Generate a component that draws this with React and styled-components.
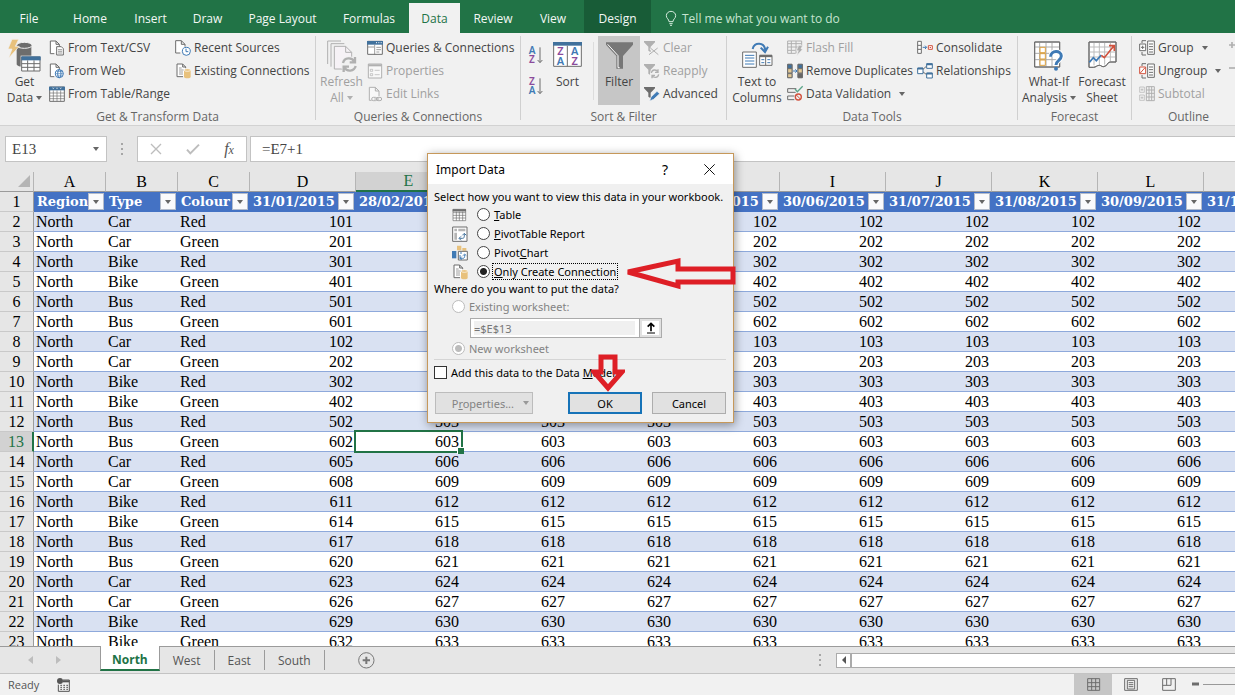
import React, { useState } from 'react';
import styled, { createGlobalStyle, css } from 'styled-components';

const uiFont = '"Open Sans", "Noto Sans", sans-serif';
const dialogFont = '"Noto Sans", "Open Sans", sans-serif';
const cellFont = '"Liberation Serif", serif';

const GlobalStyle = createGlobalStyle`
  * {
    box-sizing: border-box;
  }

  body {
    margin: 0;
    overflow: hidden;
    font-family: ${uiFont};
    font-size: 12px;
    color: #444;
  }

  button, input {
    margin: 0;
    padding: 0;
    border: none;
    background: none;
    color: inherit;
    font: inherit;
  }
`;

// Window
const Window = styled.div`
  display: flex;
  flex-direction: column;
  height: 100vh;
  background-color: #e6e6e6;
`;

const Svg = styled.svg`
  display: block;
  flex: none;
  overflow: visible;
  fill: none;
  stroke: ${props => props.$color || '#6d6d6d'};
  stroke-width: 3;
`;

const Caret = styled.span`
  flex: none;
  border: 3px solid transparent;
  border-top: 4px solid ${props => props.$color || '#666'};
  border-bottom: none;
`;

// Ribbon tabs
const TabBar = styled.nav`
  display: flex;
  flex: none;
  align-items: flex-end;
  height: 33px;
  background-color: #217346;
`;

const RibbonTab = styled.button`
  flex: none;
  width: ${props => props.$w}px;
  height: 30px;
  white-space: nowrap;
  color: #f3f8f5;
  ${props => props.$active && css`
    background-color: #f1f1f1;
    color: #217346;
  `}
  ${props => props.$context && css`
    height: 33px;
    margin-left: 4px;
    padding-top: 3px;
    background-color: #185c37;
  `}
`;

const TellMe = styled.button`
  display: flex;
  align-items: center;
  gap: 5px;
  height: 30px;
  padding-left: 14px;
  white-space: nowrap;
  color: #c5e3d0;
`;

// Ribbon
const RibbonBar = styled.div`
  display: flex;
  flex: none;
  height: 93px;
  overflow: hidden;
  background-color: #f1f1f1;
  border-bottom: 1px solid #d2d2d2;
`;

const GroupBox = styled.section`
  display: flex;
  flex-direction: column;
  flex: ${props => (props.$w ? 'none' : '1')};
  width: ${props => (props.$w ? `${props.$w}px` : 'auto')};
  margin: 3px 0 5px;
  border-right: 1px solid #d0d0d0;

  &:last-child {
    border-right: none;
  }
`;

const GroupItems = styled.div`
  display: flex;
  flex: none;
  height: 70px;
  padding-left: ${props => props.$pad || 0}px;
`;

const GroupLabel = styled.div`
  flex: none;
  margin-top: 3px;
  line-height: 16px;
  text-align: center;
  white-space: nowrap;
  color: #666;
`;

const Column = styled.div`
  display: flex;
  flex-direction: column;
  flex: none;
  width: ${props => (props.$w ? `${props.$w}px` : 'auto')};
  padding-left: ${props => props.$pad || 0}px;
`;

const SmallButton = styled.button`
  display: flex;
  align-items: center;
  gap: 3px;
  height: 23px;
  white-space: nowrap;
  color: ${props => (props.disabled ? '#a0a0a0' : '#444')};

  ${Caret} {
    margin-left: 5px;
  }
`;

const LargeButton = styled.button`
  display: flex;
  flex-direction: column;
  align-items: center;
  flex: none;
  width: ${props => props.$w}px;
  height: 69px;
  padding-top: 2px;
  line-height: 16px;
  white-space: nowrap;
  color: ${props => (props.disabled ? '#a0a0a0' : '#444')};
  background-color: ${props => (props.$pressed ? '#c6c6c6' : 'transparent')};

  svg {
    height: 35px;
    margin-bottom: 1px;
  }

  span {
    display: flex;
    align-items: center;
    gap: 3px;
  }
`;

const SortIcons = styled.div`
  display: flex;
  flex-direction: column;
  align-items: center;
  gap: 10px;
  flex: none;
  width: 30px;
  padding-top: 9px;

  button {
    height: 21px;
  }
`;

const Divider = styled.div`
  width: 1px;
  height: 58px;
  margin: 6px 4px 0 9px;
  background-color: #dcdcdc;
`;

// Formula bar
const FormulaBar = styled.div`
  display: flex;
  flex: none;
  align-items: center;
  height: 46px;
  padding-left: 5px;
  font-family: ${cellFont};
  font-size: 15px;
`;

const NameBox = styled.div`
  display: flex;
  align-items: center;
  width: 102px;
  height: 26px;
  padding: 0 7px 0 6px;
  background-color: #fff;
  border: 1px solid #c3c3c3;

  input {
    flex: 1;
    width: 60px;
  }
`;

const Dots = styled.div`
  width: 2px;
  height: 12px;
  margin: 0 ${props => props.$gap}px;
  background: repeating-linear-gradient(#a6a6a6 0 2px, transparent 2px 5px);
`;

const FormulaButtons = styled.div`
  display: flex;
  align-items: center;
  justify-content: space-around;
  width: 110px;
  height: 26px;
  background-color: #fff;
  border: 1px solid #c3c3c3;
`;

const FxButton = styled.button`
  font-style: italic;
  font-size: 16px;
  color: #555;

  small {
    font-size: 12px;
  }
`;

const FormulaInput = styled.input`
  flex: 1;
  height: 26px;
  margin-left: 3px;
  padding-left: 11px;
  background-color: #fff;
  border: 1px solid #c3c3c3;
  border-right: none;
`;

// Sheet
const SheetArea = styled.main`
  flex: 1;
  min-height: 0;
  overflow: hidden;
`;

const Sheet = styled.table`
  width: 1310px;
  table-layout: fixed;
  border-collapse: separate;
  border-spacing: 0;
  font-family: ${cellFont};
  font-size: 16px;
  line-height: 19px;
  color: #000;
`;

const Col = styled.col`
  width: ${props => props.$w}px;
`;

const Corner = styled.th`
  height: 20px;
  padding: 0 3px 2px 0;
  border-right: 1px solid #b5b5b5;
  border-bottom: 1px solid #9b9b9b;

  svg {
    margin-left: auto;
  }
`;

const ColumnHead = styled.th`
  height: 20px;
  padding: 0;
  line-height: 18px;
  font-weight: 400;
  border-right: 1px solid #b5b5b5;
  border-bottom: 1px solid #9b9b9b;
  ${props => props.$selected && css`
    color: #217346;
    background-color: #d2d2d2;
    border-bottom: 2px solid #217346;
  `}
`;

const RowHead = styled.th`
  height: 20px;
  padding: 0;
  font-weight: 400;
  background-color: #e6e6e6;
  border-right: 1px solid #9b9b9b;
  border-bottom: 1px solid #c9c9c9;
  ${props => props.$selected && css`
    color: #217346;
    background-color: #d2d2d2;
    border-right: 2px solid #217346;
  `}
`;

const FieldHead = styled.th`
  height: 20px;
  padding: 0;
  background-color: #4472c4;
  border-bottom: 1px solid #4472c4;
  font-family: "DejaVu Serif", serif;
  font-size: 13px;
  color: #fff;

  div {
    display: flex;
    align-items: center;
    justify-content: space-between;
    padding: 0 2px 0 3px;
    white-space: nowrap;
  }
`;

const FilterButton = styled.button`
  display: flex;
  align-items: center;
  justify-content: center;
  flex: none;
  width: 16px;
  height: 17px;
  background-color: #fafafc;
  border: 1px solid #b4bccb;
`;

const Cell = styled.td`
  position: relative;
  height: 20px;
  padding: 0 3px 0 2px;
  text-align: ${props => (props.$number ? 'right' : 'left')};
  background-color: ${props => (props.$banded ? '#d9e1f2' : '#fff')};
  border-bottom: 1px solid #8ea9db;
`;

const Selection = styled.div`
  position: absolute;
  z-index: 1;
  inset: -2px -1px -2px -2px;
  border: 2px solid #217346;

  &::after {
    content: '';
    position: absolute;
    right: -3px;
    bottom: -3px;
    width: 6px;
    height: 6px;
    background-color: #217346;
    border: 1px solid #fff;
    border-width: 1px 0 0 1px;
  }
`;

// Sheet tabs
const SheetBar = styled.div`
  display: flex;
  flex: none;
  height: 28px;
  border-top: 1px solid #9b9b9b;
  border-bottom: 1px solid #c3c3c3;
`;

const SheetNav = styled.div`
  display: flex;
  align-items: center;
  justify-content: center;
  gap: 23px;
  width: 100px;
  padding-right: 12px;
`;

const SheetTab = styled.button`
  height: 20px;
  margin-top: 3px;
  padding: 0 13px;
  border-right: 1px solid #9b9b9b;
  color: #555;
  ${props => props.$active && css`
    height: 25px;
    margin-top: -1px;
    padding: 3px 11px 0;
    font-weight: 700;
    color: #217346;
    background-color: #fff;
    border-left: 1px solid #9b9b9b;
    border-bottom: 2px solid #217346;
  `}
`;

const AddSheet = styled.button`
  margin-left: 33px;
`;

const ScrollBar = styled.div`
  display: flex;
  align-items: center;
  width: 416px;
  margin-left: auto;

  ${Dots} {
    margin-left: 0;
    margin-right: 15px;
  }
`;

const ScrollButton = styled.button`
  display: flex;
  align-items: center;
  justify-content: center;
  width: 15px;
  height: 15px;
  background-color: #fff;
  border: 1px solid #ababab;
`;

const ScrollThumb = styled.div`
  flex: 1;
  height: 15px;
  background-color: #fff;
  border: 1px solid #ababab;
  border-right: none;
`;

// Status bar
const StatusBar = styled.footer`
  display: flex;
  flex: none;
  align-items: center;
  height: 21px;
  padding-left: 8px;
  background-color: #f1f1f1;
  font-size: 11px;
  color: #555;

  > svg {
    margin-left: 18px;
  }
`;

const ViewButtons = styled.div`
  display: flex;
  height: 21px;
  margin-left: auto;
`;

const ViewButton = styled.button`
  display: flex;
  align-items: center;
  justify-content: center;
  width: 38px;
  background-color: ${props => (props.$active ? '#c6c6c6' : 'transparent')};
`;

const Zoom = styled.div`
  display: flex;
  align-items: center;
  gap: 4px;
  padding-left: 4px;
`;

const ZoomLine = styled.div`
  width: 32px;
  height: 1px;
  background-color: #999;
`;

// Dialog
const Dialog = styled.form`
  position: absolute;
  z-index: 2;
  top: 153px;
  left: 427px;
  width: 307px;
  background-color: #f0f0f0;
  border: 1px solid #c6985a;
  box-shadow: 1px 2px 9px rgba(0, 0, 0, 0.4);
  font-family: ${dialogFont};
  font-size: 11px;
  color: #000;
`;

const TitleBar = styled.header`
  display: flex;
  align-items: center;
  height: 30px;
  padding: 0 18px 0 8px;
  background-color: #fff;

  h2 {
    flex: 1;
    margin: 0;
    font-size: 12px;
    font-weight: 400;
  }

  button {
    font-size: 14px;
  }

  button + button {
    margin-left: 36px;
  }
`;

const DialogBody = styled.div`
  padding: 5px 7px 8px 6px;
`;

const Prompt = styled.p`
  margin: 0;
  line-height: 16px;
  white-space: nowrap;
`;

const Option = styled.div`
  display: flex;
  align-items: center;
  height: ${props => props.$h || 19}px;
  padding-left: ${props => (props.$flush ? 0 : 18)}px;
  color: ${props => (props.$disabled ? '#838383' : '#000')};

  svg {
    margin-right: 9px;
  }

  label {
    padding: 0 1px;
    line-height: 15px;
    margin-left: 2px;
    white-space: nowrap;
    border: 1px dotted ${props => (props.$focus ? '#000' : 'transparent')};
  }
`;

const Radio = styled.input`
  appearance: none;
  flex: none;
  width: 13px;
  height: 13px;
  border: 1px solid #444;
  border-radius: 50%;
  background-color: #fff;

  &:checked {
    background: radial-gradient(#222 0 3px, #fff 4px);
  }

  &:disabled {
    border-color: #bcbcbc;
  }

  &:disabled:checked {
    background: radial-gradient(#bcbcbc 0 3px, #fff 4px);
  }
`;

const CheckBox = styled.input`
  appearance: none;
  width: 13px;
  height: 13px;
  border: 1px solid #333;
  background-color: #fff;
`;

const RangeField = styled.div`
  display: flex;
  width: 192px;
  height: 20px;
  margin: 3px 0 0 36px;
  border: 1px solid #ababab;
  background-color: #fff;

  input {
    flex: 1;
    width: 100px;
    margin: 2px 5px 2px 3px;
    background-color: #f0f0f0;
    color: #777;
  }

  button {
    display: flex;
    align-items: center;
    justify-content: center;
    width: 21px;
    border: 2px solid #e1e1e1;
    outline: 1px solid #ababab;
  }
`;

const Rule = styled.hr`
  margin: 1px 0 2px;
  border: none;
  border-top: 1px solid #d5d5d5;
`;

const DialogActions = styled.div`
  display: flex;
  gap: 10px;
  margin-top: 10px;
`;

const DialogButton = styled.button`
  width: 74px;
  height: 22px;
  background-color: #e1e1e1;
  border: ${props => (props.$primary ? '2px solid #1673b8' : '1px solid #adadad')};

  &:disabled {
    display: flex;
    align-items: center;
    justify-content: flex-end;
    gap: 9px;
    width: 98px;
    margin: 0 auto 0 1px;
    padding-right: 3px;
    color: #838383;
    border-color: #bcbcbc;
  }
`;

const ArrowLeft = styled.svg`
  position: absolute;
  top: 102px;
  left: 194px;
  fill: none;
  stroke: #de1f26;
  stroke-width: 5;
  pointer-events: none;
`;

const ArrowDown = styled(ArrowLeft)`
  top: 199px;
  left: 163px;
`;

// Small ribbon icons are drawn on a 48 x 48 grid
const SmallIcon = ({ children, color, w = 16 }) => (
  <Svg width={w} height="16" viewBox={`0 0 ${w * 3} 48`} $color={color}>{children}</Svg>
);

const Page = () => (
  <path d="M16 41H4V3h17l10 10v7M21 3v10h10" fill="#fff" />
);

const TextFileIcon = () => (
  <SmallIcon>
    <Page />
    <path d="M23 20h14l6 6v19H23z" fill="#fff" />
    <path d="M27 29h12M27 34h12M27 39h12" strokeWidth="2" />
  </SmallIcon>
);

const WebIcon = () => (
  <SmallIcon>
    <Page />
    <g stroke="#3f7ab5">
      <circle cx="31" cy="32" r="12" fill="#fff" />
      <ellipse cx="31" cy="32" rx="5" ry="12" />
      <path d="M19 32h24M22 25h18M22 39h18" strokeWidth="2" />
    </g>
  </SmallIcon>
);

const TableIcon = () => (
  <SmallIcon>
    <path d="M2 3h44v43H2z" fill="#fff" />
    <path d="M0 2h48v11H0z" fill="#41719c" stroke="none" />
    <path d="M2 21h44M2 30h44M2 38h44M13 13v33M24 13v33M35 13v33" strokeWidth="2" />
    <path d="M11 5l2 3 2-3M22 5l2 3 2-3M33 5l2 3 2-3" stroke="#fff" strokeWidth="2" />
  </SmallIcon>
);

const RecentIcon = () => (
  <SmallIcon>
    <path d="M16 39H2V2h17l11 11v7M19 2v11h11" fill="#fff" />
    <circle cx="34" cy="34" r="12" fill="#fff" stroke="#3f7ab5" />
    <path d="M33 26v9h7" stroke="#3f7ab5" />
  </SmallIcon>
);

const ConnectionIcon = () => (
  <SmallIcon>
    <path d="M24 41H6V3h17l9 9v4M23 3v9h9" fill="#fff" />
    <path d="M12 15h8M12 21h14M12 27h12M12 33h12" strokeWidth="2" />
    <path d="M27 21v21c0 5 20 5 20 0V21z" fill="#e8c17c" stroke="none" />
    <ellipse cx="37" cy="21" rx="10" ry="4" fill="#e8c17c" stroke="#fff" strokeWidth="2" />
  </SmallIcon>
);

const QueriesIcon = () => (
  <SmallIcon>
    <path d="M2 4h44v39H2z" fill="#fff" />
    <path d="M0 3h48v11H0z" fill="#41719c" stroke="none" />
    <path d="M27 8h3M34 8h3M41 8h3" stroke="#fff" />
    <path d="M3 21h18M23 14v29M28 22h14M28 29h14M28 36h9" strokeWidth="2" />
  </SmallIcon>
);

const PropertiesIcon = () => (
  <SmallIcon color="#b0b0b0">
    <path d="M4 3h40v42H4z" fill="#f8f8f8" />
    <path d="M4 7h40" strokeWidth="6" />
    <path d="M10 19h7v6h-7zM10 32h7v6h-7zM23 22h15M23 35h15" strokeWidth="2" />
  </SmallIcon>
);

const LinksIcon = () => (
  <SmallIcon color="#b0b0b0">
    <path d="M14 43H7V4h18l11 11v15M25 4v11h11" fill="#f8f8f8" />
    <rect x="14" y="34" width="16" height="10" rx="5" />
    <rect x="28" y="34" width="16" height="10" rx="5" />
    <path d="M22 39h14" />
  </SmallIcon>
);

const Funnel = ({ fill }) => (
  <path d="M0 3h33v4L20 20v17l-7-5V20L0 7z" fill={fill} stroke="none" />
);

const ClearIcon = () => (
  <SmallIcon color="#b0b0b0">
    <Funnel fill="#b0b0b0" />
    <path d="M19 24l22 20M41 24L17 44" stroke="#f1f1f1" strokeWidth="8" />
    <path d="M19 24l24 20M41 24L15 44" />
  </SmallIcon>
);

const ReapplyIcon = () => (
  <SmallIcon color="#b0b0b0">
    <Funnel fill="#b0b0b0" />
    <circle cx="33" cy="32" r="15" fill="#f1f1f1" stroke="none" />
    <path d="M22 30c2-11 15-12 20-3M42 19v9h-9M44 34c-2 11-15 12-20 3M24 46v-9h9" strokeWidth="4" />
  </SmallIcon>
);

const AdvancedIcon = () => (
  <SmallIcon>
    <Funnel fill="#6d6d6d" />
    <path d="M17 45l4-12 18-17 8 7-18 17z" fill="#3f7ab5" stroke="#f1f1f1" strokeWidth="2" />
  </SmallIcon>
);

const FlashFillIcon = () => (
  <SmallIcon color="#b0b0b0">
    <path d="M2 3h42v17M2 3v37h24M2 11h42M2 21h35M2 31h24M13 3v37M27 3v37" />
    <path d="M35 16h12l-5 11h6L29 47l5-15h-6z" fill="#b0b0b0" stroke="#f1f1f1" strokeWidth="2" />
  </SmallIcon>
);

const DuplicatesIcon = () => (
  <SmallIcon>
    <path d="M2 4h13v40H2zM33 4h13v40H33z" fill="#fff" />
    <path d="M2 4h13v13H2zM33 4h13v13H33z" fill="#41719c" />
    <path d="M2 17h13v13H2zM2 32h13v12H2z" fill="#e3c995" />
    <path d="M33 17h13v13H33z" fill="#e3c995" />
    <path d="M33 32h13v12H33z" fill="#666" />
    <path d="M18 24h11M25 19l5 5-5 5" stroke="#3f7ab5" />
  </SmallIcon>
);

const ValidationIcon = () => (
  <SmallIcon>
    <path d="M28 8H2v11h24M22 30H2v11h20" />
    <path d="M24 9l7 8L47 1" stroke="#5ba588" strokeWidth="4" />
    <circle cx="34" cy="33" r="9" stroke="#d1513d" strokeWidth="4" />
    <path d="M28 27l12 12" stroke="#d1513d" />
  </SmallIcon>
);

const ConsolidateIcon = () => (
  <SmallIcon>
    <path d="M2 4h11v36H2zM2 16h11M2 28h11" fill="#fff" />
    <path d="M17 22h11M24 17l5 5-5 5" stroke="#3f7ab5" />
    <path d="M34 17h12v11H34z" stroke="#d1513d" fill="#fff" />
    <path d="M38 21h4v3h-4z" fill="#d1513d" stroke="none" />
  </SmallIcon>
);

const RelationshipsIcon = () => (
  <SmallIcon>
    <path d="M17 20L29 9M17 26l12 9" />
    <g fill="#fff" stroke="#41719c">
      <path d="M2 15h16v17H2z" />
      <path d="M29 2h17v14H29z" />
      <path d="M29 30h17v15H29z" />
      <path d="M2 17h16M29 4h17M29 32h17" strokeWidth="5" />
    </g>
  </SmallIcon>
);

const GroupIcon = ({ mark = '#6d6d6d', ungroup }) => (
  <SmallIcon>
    <path d="M21 2H9v7M9 36v9h12" />
    <path d="M26 3h20v40H26zM30 12h12M30 20h12M30 28h12M30 36h12" fill="#fff" />
    <path d="M2 12h18v20H2z" fill="#fff" stroke={mark} />
    <path d={ungroup ? 'M4 30L18 14' : 'M6 22h10M11 17v10'} stroke={mark} />
  </SmallIcon>
);

const SubtotalIcon = () => (
  <SmallIcon color="#b0b0b0">
    <path d="M2 3h14v16H2zM2 27h14v16H2zM5 11h8M9 7v8M5 35h8M9 31v8" strokeWidth="2" />
    <path d="M22 2h24v42H22zM22 12h24M22 22h24M22 33h24M30 2v42M38 2v42" />
  </SmallIcon>
);

// Large ribbon icons, three units to a pixel
const GetDataIcon = () => (
  <Svg width="33" height="33" viewBox="0 0 99 99">
    <path d="M26 18v58c0 10 44 10 44 0V18z" fill="#6d6d6d" stroke="none" />
    <ellipse cx="49" cy="19" rx="23" ry="9" fill="#6d6d6d" stroke="#f1f1f1" />
    <path d="M12 1h20L22 22h12L2 57l10-27H0z" fill="#e8c17c" stroke="#f1f1f1" strokeWidth="2" />
    <path d="M38 50h61v49H38z" fill="#f1f1f1" stroke="none" />
    <path d="M41 54h55v42H41z" fill="#fff" />
    <path d="M40 52h58v12H40z" fill="#41719c" stroke="none" />
    <path d="M41 74h55M41 85h55M59 64v32M78 64v32" />
  </Svg>
);

const RefreshIcon = () => (
  <Svg width="29" height="33" viewBox="8 0 87 99" $color="#b0b0b0">
    <path d="M10 75V6h40M20 83V14h40" />
    <path d="M30 90V22h34l18 18v50z" fill="#f6f2f6" />
    <path d="M64 22v18h18" />
    <circle cx="74" cy="77" r="25" fill="#f1f1f1" stroke="none" />
    <path d="M56 72c4-17 27-18 34-4M92 54v16H76M94 81c-4 17-27 18-34 4M58 99V83h16" strokeWidth="7" />
  </Svg>
);

const SortIcon = () => (
  <Svg width="29" height="29" viewBox="0 0 87 87">
    <path d="M2 8h83v68H2z" fill="#fff" />
    <path d="M0 3h87v11H0z" fill="#41719c" stroke="none" />
    <path d="M43 14v62" />
    <g stroke="none" fontFamily="Noto Sans" fontSize="33" fontWeight="600" textAnchor="middle">
      <text x="22" y="42" fill="#8b4b9b">Z</text>
      <text x="22" y="72" fill="#3f7ab5">A</text>
      <text x="65" y="42" fill="#3f7ab5">A</text>
      <text x="65" y="72" fill="#8b4b9b">Z</text>
    </g>
  </Svg>
);

const SortOrderIcon = ({ top, bottom }) => (
  <Svg width="14" height="19" viewBox="0 0 42 57">
    <g stroke="none" fontFamily="Noto Sans" fontSize="30" fontWeight="600" textAnchor="middle">
      <text x="9" y="24" fill={top === 'A' ? '#3f7ab5' : '#8b4b9b'}>{top}</text>
      <text x="9" y="50" fill={bottom === 'A' ? '#3f7ab5' : '#8b4b9b'}>{bottom}</text>
    </g>
    <path d="M33 4v45M26 42l7 8 7-8" />
  </Svg>
);

const FilterIcon = () => (
  <Svg width="29" height="29" viewBox="0 0 87 87">
    <path d="M3 4h81v7L54 45v38H34V45L3 11z" fill="#777" stroke="none" />
    <path d="M8 10l31 34v36h5" stroke="#fff" />
  </Svg>
);

const ColumnsIcon = () => (
  <Svg width="31" height="29" viewBox="0 0 93 87">
    <path d="M2 33h41v46H2z" fill="#fff" />
    <path d="M9 43h28M9 51h28M9 60h28M9 69h28" stroke="#3f7ab5" />
    <path d="M53 43h37v30H53zM71 43v30" fill="#fff" />
    <path d="M53 45h37" strokeWidth="7" />
    <path d="M58 56h9M58 65h9M76 56h9M76 65h9" stroke="#3f7ab5" />
    <path d="M32 24c4-22 35-22 38 4" stroke="#3f7ab5" strokeWidth="6" />
    <path d="M56 20l13 13 9-16" stroke="#3f7ab5" strokeWidth="6" />
  </Svg>
);

const WhatIfIcon = () => (
  <Svg width="30" height="31" viewBox="0 0 90 93">
    <path d="M2 6h75v75H2z" fill="#fff" />
    <path d="M17 6v75M36 6v75M54 6v75M2 21h75M2 40h75M2 59h75" stroke="#aaa" />
    <path d="M2 6h75v75H2z" />
    <path d="M18 22h16v16H18zM18 41h16v16H18zM18 60h16v16H18z" stroke="#dca03f" fill="#fff" />
    <path d="M50 50c0-20 32-20 32-2 0 13-16 13-16 27" stroke="#fff" strokeWidth="15" />
    <path d="M50 50c0-20 32-20 32-2 0 13-16 13-16 27" stroke="#3f7ab5" strokeWidth="9" />
    <circle cx="66" cy="86" r="6" fill="#3f7ab5" stroke="none" />
  </Svg>
);

const ForecastIcon = () => (
  <Svg width="29" height="31" viewBox="0 0 87 93">
    <path d="M3 6h81v60H66c-8 0-8 14-20 14-6 0-6-4-12-4-8 0-10 6-18 6H3z" fill="#fff" />
    <path d="M18 6v70M34 6v70M50 6v68M67 6v60M3 21h81M3 36h81M3 51h81" stroke="#bbb" />
    <path d="M3 6h81v60H66c-8 0-8 14-20 14-6 0-6-4-12-4-8 0-10 6-18 6H3z" />
    <path d="M4 67l12-14 9 9 15-17" stroke="#3f7ab5" strokeWidth="5" />
    <path d="M40 46l9 7 29-36M63 17h16v16" stroke="#d1513d" strokeWidth="5" />
  </Svg>
);

// Dialog icons
const PivotTableIcon = () => (
  <SmallIcon>
    <path d="M2 3h43v43H2z" fill="#fff" />
    <path d="M7 8h8v8H7zM19 8h21v8H19zM7 20h8v21H7z" fill="#b5b5b5" stroke="none" />
    <path d="M22 37h9c6 0 6-3 6-14M27 31l-6 6 6 6M31 28l6-6 6 6" stroke="#41719c" />
  </SmallIcon>
);

const PivotChartIcon = () => (
  <SmallIcon>
    <path d="M0 18h13v22H0z" fill="#3f7ab5" stroke="none" />
    <path d="M15 2h13v14H15zM31 9h12v8H31z" fill="#e8c17c" stroke="none" />
    <path d="M19 19h27v26H19z" fill="#fff" />
    <path d="M24 24h6M24 30v10h8c6 0 6-3 6-10M29 35l-5 5 5 5M33 32l5-5 5 5" stroke="#3f7ab5" />
  </SmallIcon>
);

const PlainTableIcon = () => (
  <SmallIcon>
    <path d="M3 7h38v34H3zM3 17h38M3 25h38M3 33h38M13 14v27M22 14v27M32 14v27" fill="#fff" strokeWidth="2" />
    <path d="M2 10h40" strokeWidth="7" />
  </SmallIcon>
);

const tabs = [
  { label: 'File', w: 58 },
  { label: 'Home', w: 64 },
  { label: 'Insert', w: 57 },
  { label: 'Draw', w: 57 },
  { label: 'Page Layout', w: 93 },
  { label: 'Formulas', w: 80 },
  { label: 'Data', w: 51 },
  { label: 'Review', w: 66 },
  { label: 'View', w: 54 },
  { label: 'Design', w: 67, context: true },
];

const columns = [
  { letter: 'A', title: 'Region', w: 72 },
  { letter: 'B', title: 'Type', w: 72 },
  { letter: 'C', title: 'Colour', w: 72 },
  { letter: 'D', title: '31/01/2015', w: 106 },
  { letter: 'E', title: '28/02/2015', w: 106 },
  { letter: 'F', title: '31/03/2015', w: 106 },
  { letter: 'G', title: '30/04/2015', w: 106 },
  { letter: 'H', title: '31/05/2015', w: 106 },
  { letter: 'I', title: '30/06/2015', w: 106 },
  { letter: 'J', title: '31/07/2015', w: 106 },
  { letter: 'K', title: '31/08/2015', w: 106 },
  { letter: 'L', title: '30/09/2015', w: 106 },
  { letter: 'M', title: '31/10/2015', w: 106 },
];

// Type, colour and January value; every later month is one more
const rows = [
  ['Car', 'Red', 101],
  ['Car', 'Green', 201],
  ['Bike', 'Red', 301],
  ['Bike', 'Green', 401],
  ['Bus', 'Red', 501],
  ['Bus', 'Green', 601],
  ['Car', 'Red', 102],
  ['Car', 'Green', 202],
  ['Bike', 'Red', 302],
  ['Bike', 'Green', 402],
  ['Bus', 'Red', 502],
  ['Bus', 'Green', 602],
  ['Car', 'Red', 605],
  ['Car', 'Green', 608],
  ['Bike', 'Red', 611],
  ['Bike', 'Green', 614],
  ['Bus', 'Red', 617],
  ['Bus', 'Green', 620],
  ['Car', 'Red', 623],
  ['Car', 'Green', 626],
  ['Bike', 'Red', 629],
  ['Bike', 'Green', 632],
];

const months = columns.slice(3);

const Ribbon = () => (
  <RibbonBar>
    <GroupBox $w={316}>
      <GroupItems>
        <LargeButton $w={49}>
          <GetDataIcon />
          <span>Get</span>
          <span>Data <Caret /></span>
        </LargeButton>
        <Column $w={126}>
          <SmallButton><TextFileIcon />From Text/CSV</SmallButton>
          <SmallButton><WebIcon />From Web</SmallButton>
          <SmallButton><TableIcon />From Table/Range</SmallButton>
        </Column>
        <Column>
          <SmallButton><RecentIcon />Recent Sources</SmallButton>
          <SmallButton><ConnectionIcon />Existing Connections</SmallButton>
        </Column>
      </GroupItems>
      <GroupLabel>Get &amp; Transform Data</GroupLabel>
    </GroupBox>

    <GroupBox $w={205}>
      <GroupItems>
        <LargeButton $w={51} disabled>
          <RefreshIcon />
          <span>Refresh</span>
          <span>All <Caret $color="#b0b0b0" /></span>
        </LargeButton>
        <Column>
          <SmallButton><QueriesIcon />Queries &amp; Connections</SmallButton>
          <SmallButton disabled><PropertiesIcon />Properties</SmallButton>
          <SmallButton disabled><LinksIcon />Edit Links</SmallButton>
        </Column>
      </GroupItems>
      <GroupLabel>Queries &amp; Connections</GroupLabel>
    </GroupBox>

    <GroupBox $w={206}>
      <GroupItems>
        <SortIcons>
          <button aria-label="Sort A to Z"><SortOrderIcon top="A" bottom="Z" /></button>
          <button aria-label="Sort Z to A"><SortOrderIcon top="Z" bottom="A" /></button>
        </SortIcons>
        <LargeButton $w={33}>
          <SortIcon />
          <span>Sort</span>
        </LargeButton>
        <Divider />
        <LargeButton $w={42} $pressed>
          <FilterIcon />
          <span>Filter</span>
        </LargeButton>
        <Column $pad={4}>
          <SmallButton disabled><ClearIcon />Clear</SmallButton>
          <SmallButton disabled><ReapplyIcon />Reapply</SmallButton>
          <SmallButton><AdvancedIcon />Advanced</SmallButton>
        </Column>
      </GroupItems>
      <GroupLabel>Sort &amp; Filter</GroupLabel>
    </GroupBox>

    <GroupBox $w={291}>
      <GroupItems>
        <LargeButton $w={60}>
          <ColumnsIcon />
          <span>Text to</span>
          <span>Columns</span>
        </LargeButton>
        <Column $w={130}>
          <SmallButton disabled><FlashFillIcon />Flash Fill</SmallButton>
          <SmallButton><DuplicatesIcon />Remove Duplicates</SmallButton>
          <SmallButton><ValidationIcon />Data Validation <Caret /></SmallButton>
        </Column>
        <Column>
          <SmallButton><ConsolidateIcon />Consolidate</SmallButton>
          <SmallButton><RelationshipsIcon />Relationships</SmallButton>
        </Column>
      </GroupItems>
      <GroupLabel>Data Tools</GroupLabel>
    </GroupBox>

    <GroupBox $w={114}>
      <GroupItems $pad={4}>
        <LargeButton $w={54}>
          <WhatIfIcon />
          <span>What-If</span>
          <span>Analysis <Caret /></span>
        </LargeButton>
        <LargeButton $w={52}>
          <ForecastIcon />
          <span>Forecast</span>
          <span>Sheet</span>
        </LargeButton>
      </GroupItems>
      <GroupLabel>Forecast</GroupLabel>
    </GroupBox>

    <GroupBox>
      <GroupItems $pad={7}>
        <Column $w={90}>
          <SmallButton><GroupIcon />Group <Caret /></SmallButton>
          <SmallButton><GroupIcon mark="#d1513d" ungroup />Ungroup <Caret /></SmallButton>
          <SmallButton disabled><SubtotalIcon />Subtotal</SmallButton>
        </Column>
        <Column>
          <SmallButton disabled aria-label="Show Detail">
            <SmallIcon color="#b0b0b0"><path d="M0 15h18M9 6v18" strokeWidth="5" /></SmallIcon>
          </SmallButton>
          <SmallButton disabled aria-label="Hide Detail">
            <SmallIcon color="#b0b0b0"><path d="M0 15h18" strokeWidth="5" /></SmallIcon>
          </SmallButton>
        </Column>
      </GroupItems>
      <GroupLabel>Outline</GroupLabel>
    </GroupBox>
  </RibbonBar>
);

const Worksheet = () => (
  <SheetArea>
    <Sheet>
      <colgroup>
        <Col $w={34} />
        {columns.map(column => <Col key={column.letter} $w={column.w} />)}
      </colgroup>
      <thead>
        <tr>
          <Corner>
            <Svg width="12" height="12" viewBox="0 0 12 12">
              <path d="M12 0v12H0z" fill="#b5b5b5" stroke="none" />
            </Svg>
          </Corner>
          {columns.map(column => (
            <ColumnHead key={column.letter} $selected={column.letter === 'E'}>{column.letter}</ColumnHead>
          ))}
        </tr>
      </thead>
      <tbody>
        <tr>
          <RowHead>1</RowHead>
          {columns.map(column => (
            <FieldHead key={column.letter}>
              <div>
                {column.title}
                <FilterButton aria-label={`Filter ${column.title}`}><Caret /></FilterButton>
              </div>
            </FieldHead>
          ))}
        </tr>
        {rows.map(([type, colour, value], i) => {
          const banded = i % 2 === 0;
          const rowNumber = i + 2;
          return (
            <tr key={rowNumber}>
              <RowHead $selected={rowNumber === 13}>{rowNumber}</RowHead>
              <Cell $banded={banded}>North</Cell>
              <Cell $banded={banded}>{type}</Cell>
              <Cell $banded={banded}>{colour}</Cell>
              {months.map((month, m) => (
                <Cell key={month.letter} $banded={banded} $number>
                  {m === 0 ? value : value + 1}
                  {rowNumber === 13 && month.letter === 'E' && <Selection />}
                </Cell>
              ))}
            </tr>
          );
        })}
      </tbody>
    </Sheet>
  </SheetArea>
);

const ImportDialog = () => {
  const [view, setView] = useState('connection');
  const [addToModel, setAddToModel] = useState(false);

  const options = [
    { id: 'table', icon: <PlainTableIcon />, label: <><u>T</u>able</> },
    { id: 'pivot', icon: <PivotTableIcon />, label: <><u>P</u>ivotTable Report</> },
    { id: 'chart', icon: <PivotChartIcon />, label: <>Pivot<u>C</u>hart</> },
    { id: 'connection', icon: <ConnectionIcon />, label: <><u>O</u>nly Create Connection</> },
  ];

  return (
    <Dialog onSubmit={e => e.preventDefault()}>
      <TitleBar>
        <h2>Import Data</h2>
        <button type="button" aria-label="Help">?</button>
        <button type="button" aria-label="Close">
          <Svg width="11" height="11" viewBox="0 0 33 33" $color="#111">
            <path d="M1 1l31 31M32 1L1 32" />
          </Svg>
        </button>
      </TitleBar>
      <DialogBody>
        <Prompt>Select how you want to view this data in your workbook.</Prompt>
        {options.map(option => (
          <Option key={option.id} $focus={view === option.id}>
            {option.icon}
            <Radio
              type="radio"
              id={option.id}
              name="view"
              checked={view === option.id}
              onChange={() => setView(option.id)}
            />
            <label htmlFor={option.id}>{option.label}</label>
          </Option>
        ))}
        <Prompt>Where do you want to put the data?</Prompt>
        <Option $disabled $h={18}>
          <Radio type="radio" id="existing" name="place" disabled />
          <label htmlFor="existing">Existing worksheet:</label>
        </Option>
        <RangeField>
          <input aria-label="Cell range" defaultValue="=$E$13" disabled />
          <button type="button" aria-label="Pick range">
            <Svg width="10" height="12" viewBox="0 0 30 36" $color="#000">
              <path d="M15 28V4M5 14L15 4l10 10" strokeWidth="5" />
              <path d="M3 33h24" />
            </Svg>
          </button>
        </RangeField>
        <Option $disabled $h={20}>
          <Radio type="radio" id="new" name="place" defaultChecked disabled />
          <label htmlFor="new">New worksheet</label>
        </Option>
        <Rule />
        <Option $flush $h={20}>
          <CheckBox
            type="checkbox"
            id="model"
            checked={addToModel}
            onChange={e => setAddToModel(e.target.checked)}
          />
          <label htmlFor="model">Add this data to the Data <u>M</u>odel</label>
        </Option>
        <DialogActions>
          <DialogButton type="button" disabled><span>P<u>r</u>operties...</span><Caret $color="#999" /></DialogButton>
          <DialogButton $primary>OK</DialogButton>
          <DialogButton type="button">Cancel</DialogButton>
        </DialogActions>
      </DialogBody>
      <ArrowLeft width="117" height="34" viewBox="0 0 117 34">
        <path d="M6 16L56 5v8h55v13H56v4z" />
      </ArrowLeft>
      <ArrowDown width="34" height="40" viewBox="0 0 34 40">
        <path d="M10 4h14v15h7L17 35 3 19h7z" />
      </ArrowDown>
    </Dialog>
  );
};

const App = () => {
  const [activeTab, setActiveTab] = useState('Data');

  return (
    <Window>
      <GlobalStyle />
      <TabBar>
        {tabs.map(tab => (
          <RibbonTab
            key={tab.label}
            $w={tab.w}
            $active={tab.label === activeTab}
            $context={tab.context}
            onClick={() => setActiveTab(tab.label)}
          >
            {tab.label}
          </RibbonTab>
        ))}
        <TellMe>
          <Svg width="12" height="15" viewBox="0 0 36 45" $color="#d5ebdd">
            <path d="M12 32c0-8-8-9-8-18a14 13 0 0128 0c0 9-8 10-8 18zM13 38h10M15 43h6" />
          </Svg>
          Tell me what you want to do
        </TellMe>
      </TabBar>

      <Ribbon />

      <FormulaBar>
        <NameBox>
          <input aria-label="Name box" defaultValue="E13" />
          <Caret />
        </NameBox>
        <Dots $gap={14} />
        <FormulaButtons>
          <button aria-label="Cancel">
            <Svg width="12" height="12" viewBox="0 0 36 36" $color="#bdbdbd">
              <path d="M3 3l30 30M33 3L3 33" strokeWidth="4" />
            </Svg>
          </button>
          <button aria-label="Enter">
            <Svg width="14" height="12" viewBox="0 0 42 36" $color="#bdbdbd">
              <path d="M3 20l10 11L39 5" strokeWidth="6" />
            </Svg>
          </button>
          <FxButton aria-label="Insert function">f<small>x</small></FxButton>
        </FormulaButtons>
        <FormulaInput aria-label="Formula" defaultValue="=E7+1" />
      </FormulaBar>

      <Worksheet />

      <SheetBar>
        <SheetNav>
          <Svg width="5" height="8" viewBox="0 0 5 8"><path d="M5 0v8L0 4z" fill="#bdbdbd" stroke="none" /></Svg>
          <Svg width="5" height="8" viewBox="0 0 5 8"><path d="M0 0v8l5-4z" fill="#bdbdbd" stroke="none" /></Svg>
        </SheetNav>
        <SheetTab $active>North</SheetTab>
        <SheetTab>West</SheetTab>
        <SheetTab>East</SheetTab>
        <SheetTab>South</SheetTab>
        <AddSheet aria-label="New sheet">
          <Svg width="17" height="17" viewBox="0 0 51 51" $color="#777">
            <circle cx="25" cy="25" r="23" />
            <path d="M14 25h22M25 14v22" strokeWidth="6" />
          </Svg>
        </AddSheet>
        <ScrollBar>
          <Dots $gap={0} />
          <ScrollButton aria-label="Scroll left">
            <Svg width="4" height="8" viewBox="0 0 4 8"><path d="M4 0v8L0 4z" fill="#555" stroke="none" /></Svg>
          </ScrollButton>
          <ScrollThumb />
        </ScrollBar>
      </SheetBar>

      <StatusBar>
        Ready
        <Svg width="13" height="14" viewBox="0 0 39 42" $color="#555">
          <path d="M18 6h19v34H4V20" />
          <path d="M18 10h19" strokeWidth="6" />
          <path d="M10 22h5M19 22h5M28 22h5M10 28h5M19 28h5M28 28h5M10 34h5M19 34h5M28 34h5" />
          <circle cx="9" cy="9" r="9" fill="#555" stroke="none" />
        </Svg>
        <ViewButtons>
          <ViewButton $active aria-label="Normal">
            <Svg width="13" height="13" viewBox="0 0 39 39">
              <path d="M2 2h36v35H2zM2 14h36M2 26h36M14 2v35M26 2v35" />
            </Svg>
          </ViewButton>
          <ViewButton aria-label="Page layout">
            <Svg width="14" height="13" viewBox="0 0 42 39">
              <path d="M2 2h38v35H2zM10 7h22v26H10zM14 14h14M14 20h14M14 26h14" />
            </Svg>
          </ViewButton>
          <ViewButton aria-label="Page break preview">
            <Svg width="14" height="13" viewBox="0 0 42 39">
              <path d="M2 2h38v35H2zM2 22h25V2M14 2v20" />
            </Svg>
          </ViewButton>
          <Zoom>
            <Svg width="7" height="3" viewBox="0 0 7 3"><path d="M0 1h7" /></Svg>
            <ZoomLine />
          </Zoom>
        </ViewButtons>
      </StatusBar>

      <ImportDialog />
    </Window>
  );
};

export default App;
